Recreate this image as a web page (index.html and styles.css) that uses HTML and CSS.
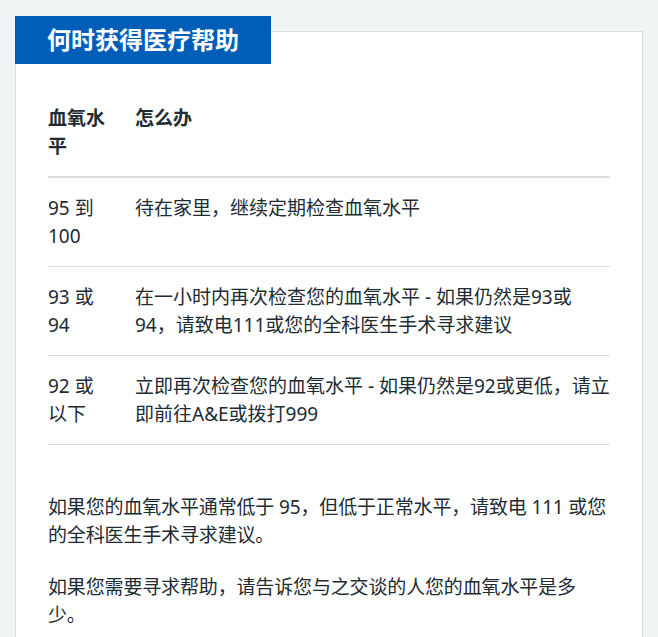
FILE: index.html
```html
<!DOCTYPE html>
<html lang="zh-CN">
<head>
<meta charset="utf-8">
<title>何时获得医疗帮助</title>
<link rel="stylesheet" href="styles.css">
</head>
<body>
<div class="card">
  <h2 class="card-heading">何时获得医疗帮助</h2>
  <div class="card-content">
    <table class="table">
      <thead>
        <tr><th class="col-level">血氧水平</th><th>怎么办</th></tr>
      </thead>
      <tbody>
        <tr><td class="col-level">95 到 100</td><td>待在家里，继续定期检查血氧水平</td></tr>
        <tr><td class="col-level">93 或 94</td><td>在一小时内再次检查您的血氧水平 - 如果仍然是93或94，请致电111或您的全科医生手术寻求建议</td></tr>
        <tr><td class="col-level">92 或 以下</td><td>立即再次检查您的血氧水平 - 如果仍然是92或更低，请立即前往A&amp;E或拨打999</td></tr>
      </tbody>
    </table>
    <p class="para">如果您的血氧水平通常低于 95，但低于正常水平，请致电 111 或您的全科医生手术寻求建议。</p>
    <p class="para">如果您需要寻求帮助，请告诉您与之交谈的人您的血氧水平是多少。</p>
  </div>
</div>
</body>
</html>
```

FILE: styles.css
```css
html, body {
  margin: 0;
  padding: 0;
}
body {
  background: #f0f4f5;
  color: #212b32;
  font-family: "Noto Sans", "Noto Sans CJK SC", sans-serif;
  font-size: 19px;
  line-height: 28px;
}
.card {
  margin: 31px 15px 0 15px;
  background: #fff;
  border: 1px solid #d8dde0;
  border-bottom: none;
  min-height: 620px;
}
.card-heading {
  display: block;
  width: fit-content;
  margin: -16px 0 0 -1px;
  padding: 8px 32px;
  background: #005eb8;
  color: #fff;
  font-size: 24px;
  line-height: 32px;
  font-weight: 700;
}
.card-content {
  padding: 24px 32px 0 32px;
}
.table {
  width: 100%;
  border-collapse: collapse;
  border-spacing: 0;
  margin: 0 0 48px 0;
}
.table th, .table td {
  text-align: left;
  vertical-align: top;
  padding: 16px 24px 16px 0;
}
.table th {
  font-weight: 700;
  border-bottom: 2px solid #d8dde0;
}
.table td {
  border-bottom: 1px solid #d8dde0;
}
.table th:last-child, .table td:last-child {
  padding-right: 0;
}
.col-level {
  width: 63px;
}
.para {
  margin: 0 0 24px 0;
  letter-spacing: -0.15px;
}
```
